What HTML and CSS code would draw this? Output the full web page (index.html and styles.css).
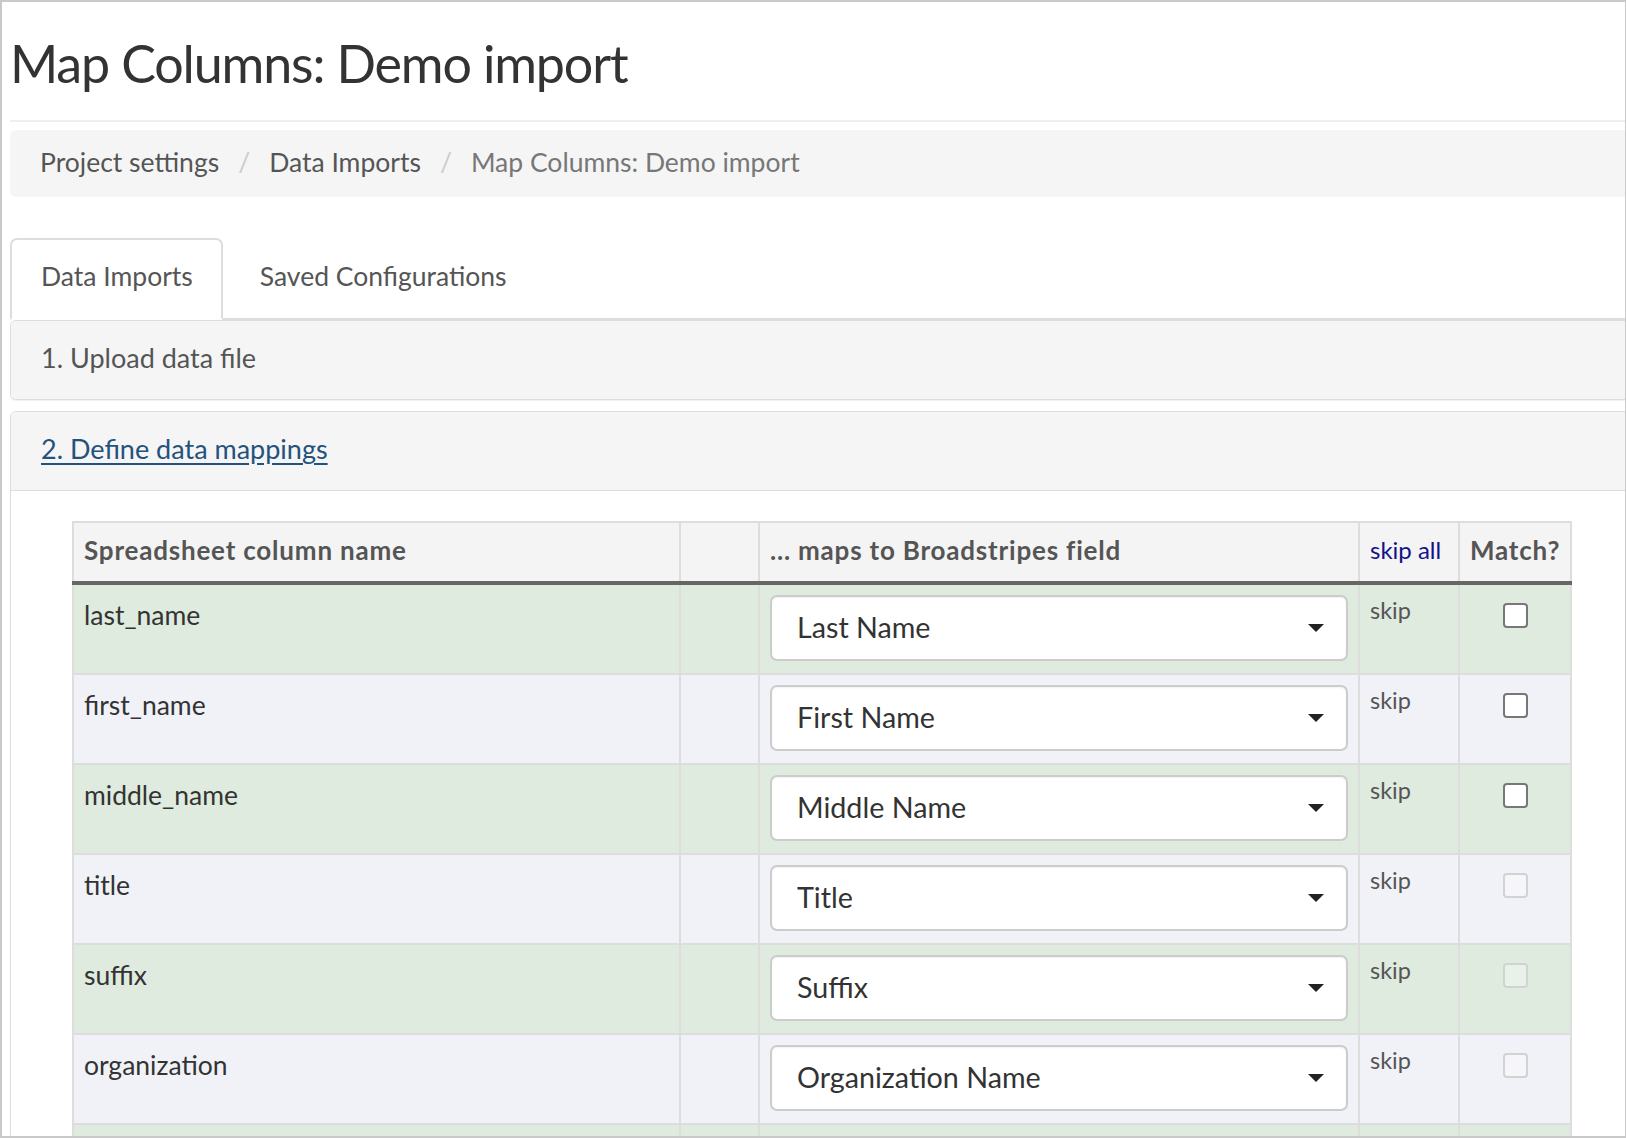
FILE: index.html
```html
<!DOCTYPE html>
<html lang="en">
<head>
<meta charset="utf-8">
<title>Map Columns: Demo import</title>
<link rel="stylesheet" href="styles.css">
</head>
<body>
<div class="frame">
  <div class="page">
    <h1 class="title">Map Columns: Demo import</h1>
    <hr class="rule">
    <ol class="crumbs">
      <li><a href="#">Project settings</a></li>
      <li><a href="#">Data Imports</a></li>
      <li class="current">Map Columns: Demo import</li>
    </ol>
    <ul class="tabs">
      <li class="tab active">Data Imports</li>
      <li class="tab">Saved Configurations</li>
    </ul>
    <div class="panel">
      <div class="panel-head">1. Upload data file</div>
    </div>
    <div class="panel open">
      <div class="panel-head"><a href="#" class="step-link">2. Define data mappings</a></div>
      <div class="panel-body">
        <table class="map">
          <colgroup>
            <col class="c-name"><col class="c-gap"><col class="c-field"><col class="c-skip"><col class="c-match">
          </colgroup>
          <thead>
            <tr>
              <th>Spreadsheet column name</th>
              <th></th>
              <th>... maps to Broadstripes field</th>
              <th class="skipall"><a href="#">skip all</a></th>
              <th>Match?</th>
            </tr>
          </thead>
          <tbody>
            <tr class="g">
              <td class="name">last_name</td><td></td>
              <td><div class="select"><span>Last Name</span><svg class="caret" width="16" height="8" viewBox="0 0 16 8"><polygon points="0,0 16,0 8,8"/></svg></div></td>
              <td class="skip">skip</td>
              <td class="chk"><input type="checkbox"></td>
            </tr>
            <tr class="l">
              <td class="name">first_name</td><td></td>
              <td><div class="select"><span>First Name</span><svg class="caret" width="16" height="8" viewBox="0 0 16 8"><polygon points="0,0 16,0 8,8"/></svg></div></td>
              <td class="skip">skip</td>
              <td class="chk"><input type="checkbox"></td>
            </tr>
            <tr class="g">
              <td class="name">middle_name</td><td></td>
              <td><div class="select"><span>Middle Name</span><svg class="caret" width="16" height="8" viewBox="0 0 16 8"><polygon points="0,0 16,0 8,8"/></svg></div></td>
              <td class="skip">skip</td>
              <td class="chk"><input type="checkbox"></td>
            </tr>
            <tr class="l">
              <td class="name">title</td><td></td>
              <td><div class="select"><span>Title</span><svg class="caret" width="16" height="8" viewBox="0 0 16 8"><polygon points="0,0 16,0 8,8"/></svg></div></td>
              <td class="skip">skip</td>
              <td class="chk"><input type="checkbox" disabled></td>
            </tr>
            <tr class="g">
              <td class="name">suffix</td><td></td>
              <td><div class="select"><span>Suffix</span><svg class="caret" width="16" height="8" viewBox="0 0 16 8"><polygon points="0,0 16,0 8,8"/></svg></div></td>
              <td class="skip">skip</td>
              <td class="chk"><input type="checkbox" disabled></td>
            </tr>
            <tr class="l">
              <td class="name">organization</td><td></td>
              <td><div class="select"><span>Organization Name</span><svg class="caret" width="16" height="8" viewBox="0 0 16 8"><polygon points="0,0 16,0 8,8"/></svg></div></td>
              <td class="skip">skip</td>
              <td class="chk"><input type="checkbox" disabled></td>
            </tr>
            <tr class="g tail">
              <td></td><td></td><td></td><td></td><td></td>
            </tr>
          </tbody>
        </table>
      </div>
    </div>
  </div>
</div>
</body>
</html>
```

FILE: styles.css
```css
html, body {
  margin: 0;
  padding: 0;
  background: #ffffff;
}

body {
  font-family: Lato, "Open Sans", sans-serif;
  color: #333333;
}

.frame {
  width: 1626px;
  height: 1138px;
  box-sizing: border-box;
  border-top: 2px solid #c9c9c9;
  border-left: 2px solid #c9c9c9;
  border-bottom: 2px solid #c9c9c9;
  border-right: 1px solid #c9c9c9;
  overflow: hidden;
}

.page {
  width: 1624px;
  padding-left: 8px;
}

.title {
  margin: 29px 0 0 0;
  font-size: 52px;
  line-height: 65px;
  letter-spacing: -1.15px;
  font-weight: 400;
  color: #333333;
}

.rule {
  margin: 24px 0 0 0;
  border: 0;
  border-top: 2px solid #eeeeee;
  height: 0;
}

.crumbs {
  list-style: none;
  margin: 8px 0 0 0;
  padding: 0 30px 2px 30px;
  height: 65px;
  background: #f5f5f5;
  border-radius: 6px;
  display: flex;
  align-items: flex-start;
  font-size: 26.5px;
  line-height: 65px;
}

.crumbs li + li::before {
  content: "/";
  color: #cccccc;
  padding: 0 19px;
}

.crumbs a {
  color: #555555;
  text-decoration: none;
}

.crumbs .current {
  color: #777777;
}

.tabs {
  list-style: none;
  margin: 41px 0 0 0;
  padding: 0;
  display: flex;
  gap: 6px;
  border-bottom: 2px solid #dddddd;
  font-size: 26.5px;
  line-height: 40px;
}

.tab {
  padding: 16px 28px 22px 29px;
  border: 2px solid transparent;
  border-radius: 7px 7px 0 0;
  margin-bottom: -2px;
  color: #555555;
}

.tab.active {
  background: #ffffff;
  border-color: #dddddd;
  border-bottom-color: transparent;
}

.panel {
  border: 1px solid #dddddd;
  border-radius: 6px;
  box-shadow: 0 1px 1px rgba(0, 0, 0, 0.06);
  background: #ffffff;
  margin-bottom: 11px;
}

.panel-head {
  background: #f5f5f5;
  padding: 17px 30px 21px 30px;
  font-size: 27px;
  line-height: 40px;
  color: #555555;
  border-radius: 6px 6px 0 0;
}

.panel:not(.open) .panel-head {
  border-radius: 6px;
}

.open .panel-head {
  border-bottom: 1px solid #dddddd;
}

.step-link {
  color: #23527c;
  text-decoration: underline;
  text-underline-offset: 4px;
}

.panel-body {
  padding: 30px 61px 0 61px;
}

.map {
  width: 1498px;
  table-layout: fixed;
  border-collapse: collapse;
  border: 2px solid #dddddd;
}

.c-name { width: 607px; }
.c-gap { width: 79px; }
.c-field { width: 600px; }
.c-skip { width: 100px; }
.c-match { width: 112px; }

.map th {
  background: #f4f4f4;
  text-align: left;
  font-size: 26px;
  font-weight: 700;
  letter-spacing: 0.8px;
  color: #555555;
  padding: 12px 10px 16px 10px;
  line-height: 30px;
  border: 2px solid #dddddd;
  border-bottom: 4px solid #666666;
  vertical-align: bottom;
  white-space: nowrap;
}

.map th.skipall {
  font-weight: 400;
  font-size: 24px;
  letter-spacing: 0;
}

.map th.skipall a {
  color: #13128a;
  text-decoration: none;
}

.map td {
  border: 2px solid #dddddd;
  padding: 10px 10px 12px 10px;
  vertical-align: top;
  font-size: 26.5px;
  line-height: 40px;
  color: #333333;
}

.map tr.g td { background: #deebde; }
.map tr.l td { background: #f1f2f8; }

.map tr.tail td {
  height: 66px;
}

.map td.skip {
  font-size: 23.5px;
  line-height: 30px;
  color: #555555;
}

.map td.chk {
  text-align: center;
  padding-top: 18px;
}

.select {
  height: 66px;
  box-sizing: border-box;
  border: 2px solid #cccccc;
  border-radius: 7px;
  background: #ffffff;
  box-shadow: inset 0 1px 2px rgba(0, 0, 0, 0.06);
  display: flex;
  align-items: center;
  justify-content: space-between;
  padding: 0 22px 2px 25px;
  font-size: 28.7px;
  color: #333333;
}

.caret {
  fill: #222222;
  flex: none;
  margin-top: 2px;
}

.chk input {
  -webkit-appearance: none;
  appearance: none;
  width: 25px;
  height: 25px;
  margin: 0;
  border: 2px solid #777777;
  border-radius: 4px;
  background: #ffffff;
  display: block;
  margin-left: auto;
  margin-right: auto;
}

.chk input:disabled {
  border-color: #d2d2d2;
  background: rgba(255, 255, 255, 0.35);
}
```
